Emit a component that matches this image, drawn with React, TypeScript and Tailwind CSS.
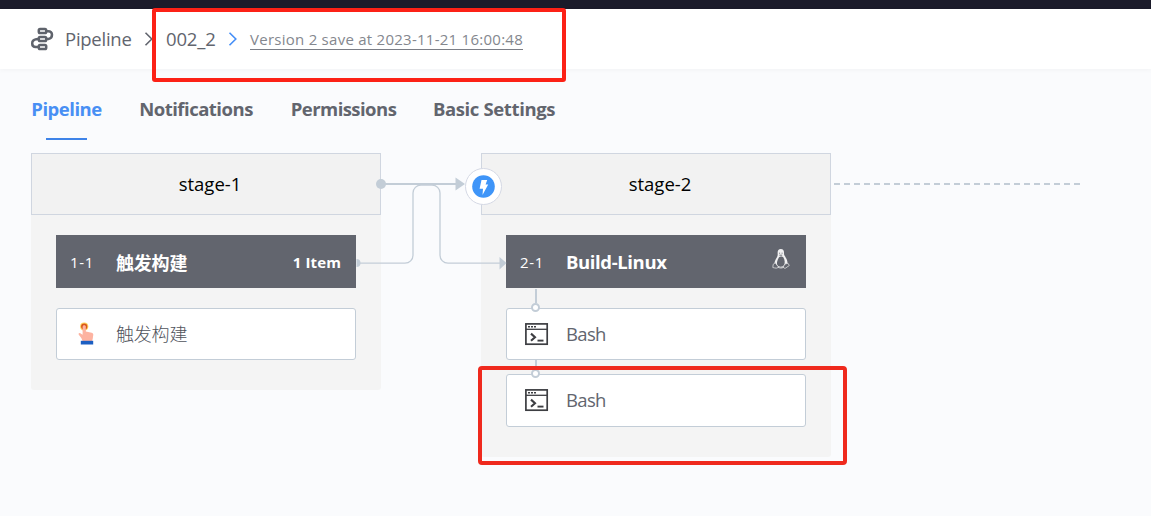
import type { ReactNode } from 'react';

const tabs = [
  { label: 'Pipeline', active: true, style: 'w-[71px] tracking-[-0.5px]' },
  { label: 'Notifications', active: false, style: 'w-[114px] tracking-[-0.5px]' },
  { label: 'Permissions', active: false, style: 'w-[106px] pl-px tracking-[-0.55px]' },
  { label: 'Basic Settings', active: false, style: 'w-[122px] tracking-[-0.37px]' },
];

function PipelineIcon() {
  return (
    <svg width="24" height="24" viewBox="0 0 24 24" fill="none" stroke="#5f636c" strokeWidth="2.5">
      <rect x="8.8" y="2.1" width="7.4" height="4" rx="1.3" />
      <rect x="8.8" y="10" width="7.4" height="4" rx="1.3" />
      <rect x="8.8" y="18" width="7.4" height="4" rx="1.3" />
      <path d="M16.200 4.200h2.200a3.600 3.600 0 0 1 3.600 3.600c0 2.400-1.600 3.900-3.600 4.100l-2.200.2M8.800 11.900l-2.600.4C3.800 12.700 2.200 14.300 2.200 16.400s1.600 3.500 3.600 3.600h3" />
    </svg>
  );
}

function Chevron({ color }: { color: string }) {
  return (
    <svg width="10" height="16" viewBox="0 0 10 16" fill="none" stroke={color} strokeWidth="1.6">
      <path d="M1.5 1.8 7.8 8l-6.3 6.2" />
    </svg>
  );
}

function TouchIcon() {
  return (
    <svg width="24" height="24" viewBox="0 0 24 24">
      <circle cx="9.2" cy="4.6" r="4.1" fill="#ffd45c" />
      <circle cx="9.2" cy="4.6" r="2.3" fill="#fbb07c" stroke="#d9571c" strokeWidth="1.7" />
      <path d="M7.6 5.200a1.600 1.600 0 0 1 3.200 0v4.400l5.900 1.200c1 .2 1.600.9 1.600 1.900l-.6 4.300-.7 2.300H7.700L6.300 16l-2.500-3.300c-.7-1 .3-2.200 1.500-1.500l2.300 1.500z" fill="#fdb3a1" />
      <rect x="5.800" y="18.800" width="12.400" height="3.700" fill="#1c5fc2" />
    </svg>
  );
}

function TerminalIcon() {
  return (
    <svg width="24" height="24" viewBox="0 0 24 24" fill="none" stroke="#3d3e42" strokeWidth="1.7">
      <rect x="0.9" y="1.900" width="21.300" height="20.300" />
      <path d="M1 7.300h21" strokeWidth="1.300" />
      <path d="M3 4.700h2m1 0h2m1 0h2" strokeWidth="1.600" />
      <path d="m6 11.600 4 3.600-4 3.600" strokeWidth="2.100" />
      <path d="M12.500 18.600h6" strokeWidth="1.900" />
    </svg>
  );
}

function LinuxIcon() {
  return (
    <svg className="-translate-x-px -translate-y-[3px]" width="18" height="22" viewBox="0 0 18 22">
      <path d="M5.7 6.600C5.300 2.800 6.200 1 8.800 1s3.500 2 3.200 5c.2 2 3.800 5.200 3.500 9.300l-2.700 3.400-7.800.4-2.400-3.500c-.1-3.700 3-5.500 3.100-9z" fill="#f1f1f2" />
      <path d="M7 9.200c.8-.8 3.500-.8 4.300.1 1.500 2.300 2 6.100.6 8.200-1.700 1.600-4.900 1.500-6.200 0C4 15.200 5.600 11.800 7 9.200z" fill="#62656e" />
      <path d="M7.100 5.200h1m1.500 0h1M7.400 7.200h2.800" stroke="#62656e" strokeWidth=".9" />
      <path d="m3.200 14.800 3.100 4c-.5 2.100-3 1.300-5.500.7l.4-3.200zM13.200 15.900l2.800-.6 1.300 2.200-3.900 2.700c-1.800.4-2.100-.9-1.800-2.200z" fill="#62656e" stroke="#ddd" strokeWidth=".8" />
      <path d="M6.200 19.300c1.700.8 3.700.8 5.400 0" fill="none" stroke="#f1f1f2" />
    </svg>
  );
}

function Stage({ name, children }: { name: string; children: ReactNode }) {
  return (
    <section className="w-[350px] rounded-b-[3px] bg-[#f4f4f4]">
      <h2 className="flex h-[62px] items-center justify-center border border-[#d0d6e0] bg-[#f2f2f2] pl-[8px] text-[18.5px] tracking-[0px] text-black">
        {name}
      </h2>
      <div className="px-[25px] pt-5">{children}</div>
    </section>
  );
}

function Job({ index, name, nameStyle, children }: { index: string; name: string; nameStyle: string; children: ReactNode }) {
  return (
    <div className="flex h-[53px] items-center bg-[#62656e] pr-[15px] pl-[14px] text-white">
      <span className="w-[46px] pt-[2px] text-[15px] tracking-[0.7px]">{index}</span>
      <span className={nameStyle}>{name}</span>
      <span className="ml-auto">{children}</span>
    </div>
  );
}

function Task({ icon, name, nameStyle, size }: { icon: ReactNode; name: string; nameStyle: string; size: string }) {
  return (
    <div className={`relative flex items-center rounded-[3px] border border-[#c3cdd7] bg-white pl-[18px] text-[#62656e] ${size}`}>
      <span className="w-[41px]">{icon}</span>
      <span className={nameStyle}>{name}</span>
    </div>
  );
}

function Joint({ position }: { position: string }) {
  return (
    <div className={`absolute left-[25px] z-10 flex w-[9px] flex-col items-center ${position}`}>
      <span className="w-[2px] grow bg-[#c3cdd7]" />
      <span className="size-[9px] shrink-0 rounded-full border-2 border-[#c3cdd7] bg-white" />
    </div>
  );
}

export default function App() {
  return (
    <div className="relative flex h-[516px] w-[1151px] flex-col overflow-hidden bg-[#fafbfd] font-['Open_Sans','Noto_Sans_CJK_SC',sans-serif]">
      <div className="h-[9px] bg-[#1b1b2a]" />
      <header className="flex h-[60px] items-center bg-white pl-[30px] text-[#62656e] shadow-[0_1px_5px_rgba(0,0,0,0.04)]">
        <PipelineIcon />
        <span className="ml-[11px] w-[79px] text-[18.5px] tracking-[-0.25px]">Pipeline</span>
        <Chevron color="#62656e" />
        <span className="ml-[12px] w-[62px] text-[18.5px] tracking-[-0.15px]">002_2</span>
        <Chevron color="#448ef7" />
        <span className="ml-[12px] border-b border-[#7b7e86] pt-px text-[15px] leading-[19px] tracking-[0.26px] whitespace-nowrap text-[#84878e]">
          Version 2 save at 2023-11-21 16:00:48
        </span>
      </header>
      <nav className="flex h-[71px] gap-[37px] pt-[27px] pl-[31px] text-[18.5px] leading-[26px] font-bold">
        {tabs.map((tab) => (
          <div key={tab.label} className={`flex flex-col items-center justify-between whitespace-nowrap ${tab.style} ${tab.active ? 'text-[#488ff4]' : 'text-[#62656e]'}`}>
            <span>{tab.label}</span>
            {tab.active && <span className="h-[2px] w-[41px] bg-[#3e83e8]" />}
          </div>
        ))}
      </nav>

      <main className="relative mt-[13px] flex items-start gap-[100px] pl-[31px]">
        <Stage name="stage-1">
          <div className="h-[155px]">
            <Job index="1-1" name="触发构建" nameStyle="pt-[3px] text-[18px] font-bold tracking-[-0.2px]">
              <span className="text-[15px] font-bold tracking-[0.1px]">1 Item</span>
            </Job>
            <div className="mt-5">
              <Task icon={<TouchIcon />} name="触发构建" nameStyle="text-[18px] font-light tracking-[-0.2px] text-[#50535c]" size="h-[52px]" />
            </div>
          </div>
        </Stage>
        <Stage name="stage-2">
          <div className="relative h-[222px]">
            <Job index="2-1" name="Build-Linux" nameStyle="pt-px text-[18.5px] font-bold tracking-[-0.38px]">
              <LinuxIcon />
            </Job>
            <div className="mt-5 flex flex-col gap-[14px]">
              <Task icon={<TerminalIcon />} name="Bash" nameStyle="text-[18.5px] tracking-[-0.65px]" size="h-[52px]" />
              <Task icon={<TerminalIcon />} name="Bash" nameStyle="text-[18.5px] tracking-[-0.65px]" size="h-[53px] pb-px" />
            </div>
            <Joint position="top-[54px] h-[23px]" />
            <Joint position="top-[125px] h-[18px]" />
          </div>
        </Stage>

        <svg className="absolute top-0 left-0" width="1151" height="140" viewBox="0 153 1151 140" fill="none">
          <path d="M381 184H457" stroke="#c3cdd7" strokeWidth="2" />
          <circle cx="381" cy="184" r="5" fill="#c3cdd7" />
          <path d="M455.500 177.500V190.500L465 184z" fill="#c3cdd7" />
          <path d="M356.500 259a4 4 0 0 1 0 8z" fill="#c3cdd7" />
          <path d="M359 263.200H405a8 8 0 0 0 8-8V193a8 8 0 0 1 8-8H432a8 8 0 0 1 8 8V255.200a8 8 0 0 0 8 8H501" stroke="#c3cdd7" strokeWidth="1.300" />
          <path d="M499.500 257V269.500L506.500 263z" fill="#c3cdd7" />
          <path d="M834 184H1081" stroke="#c3cdd7" strokeWidth="2" strokeDasharray="6 4" />
          <circle cx="483.500" cy="186.500" r="18" fill="white" stroke="#d5d9e5" />
          <circle cx="483.500" cy="186.500" r="11.300" fill="#3f95f8" />
          <path d="M481.500 180H487.200L485.600 184.500H488.200L482.500 195L483 188.700H479.600z" fill="white" />
        </svg>
      </main>

      <div className="absolute top-[8px] left-[152px] h-[74px] w-[414px] rounded-[3px] border-4 border-[#fc2116]" />
      <div className="absolute top-[366px] left-[478px] z-20 h-[99px] w-[369px] rounded-[4px] border-4 border-[#ef291d]" />
    </div>
  );
}
